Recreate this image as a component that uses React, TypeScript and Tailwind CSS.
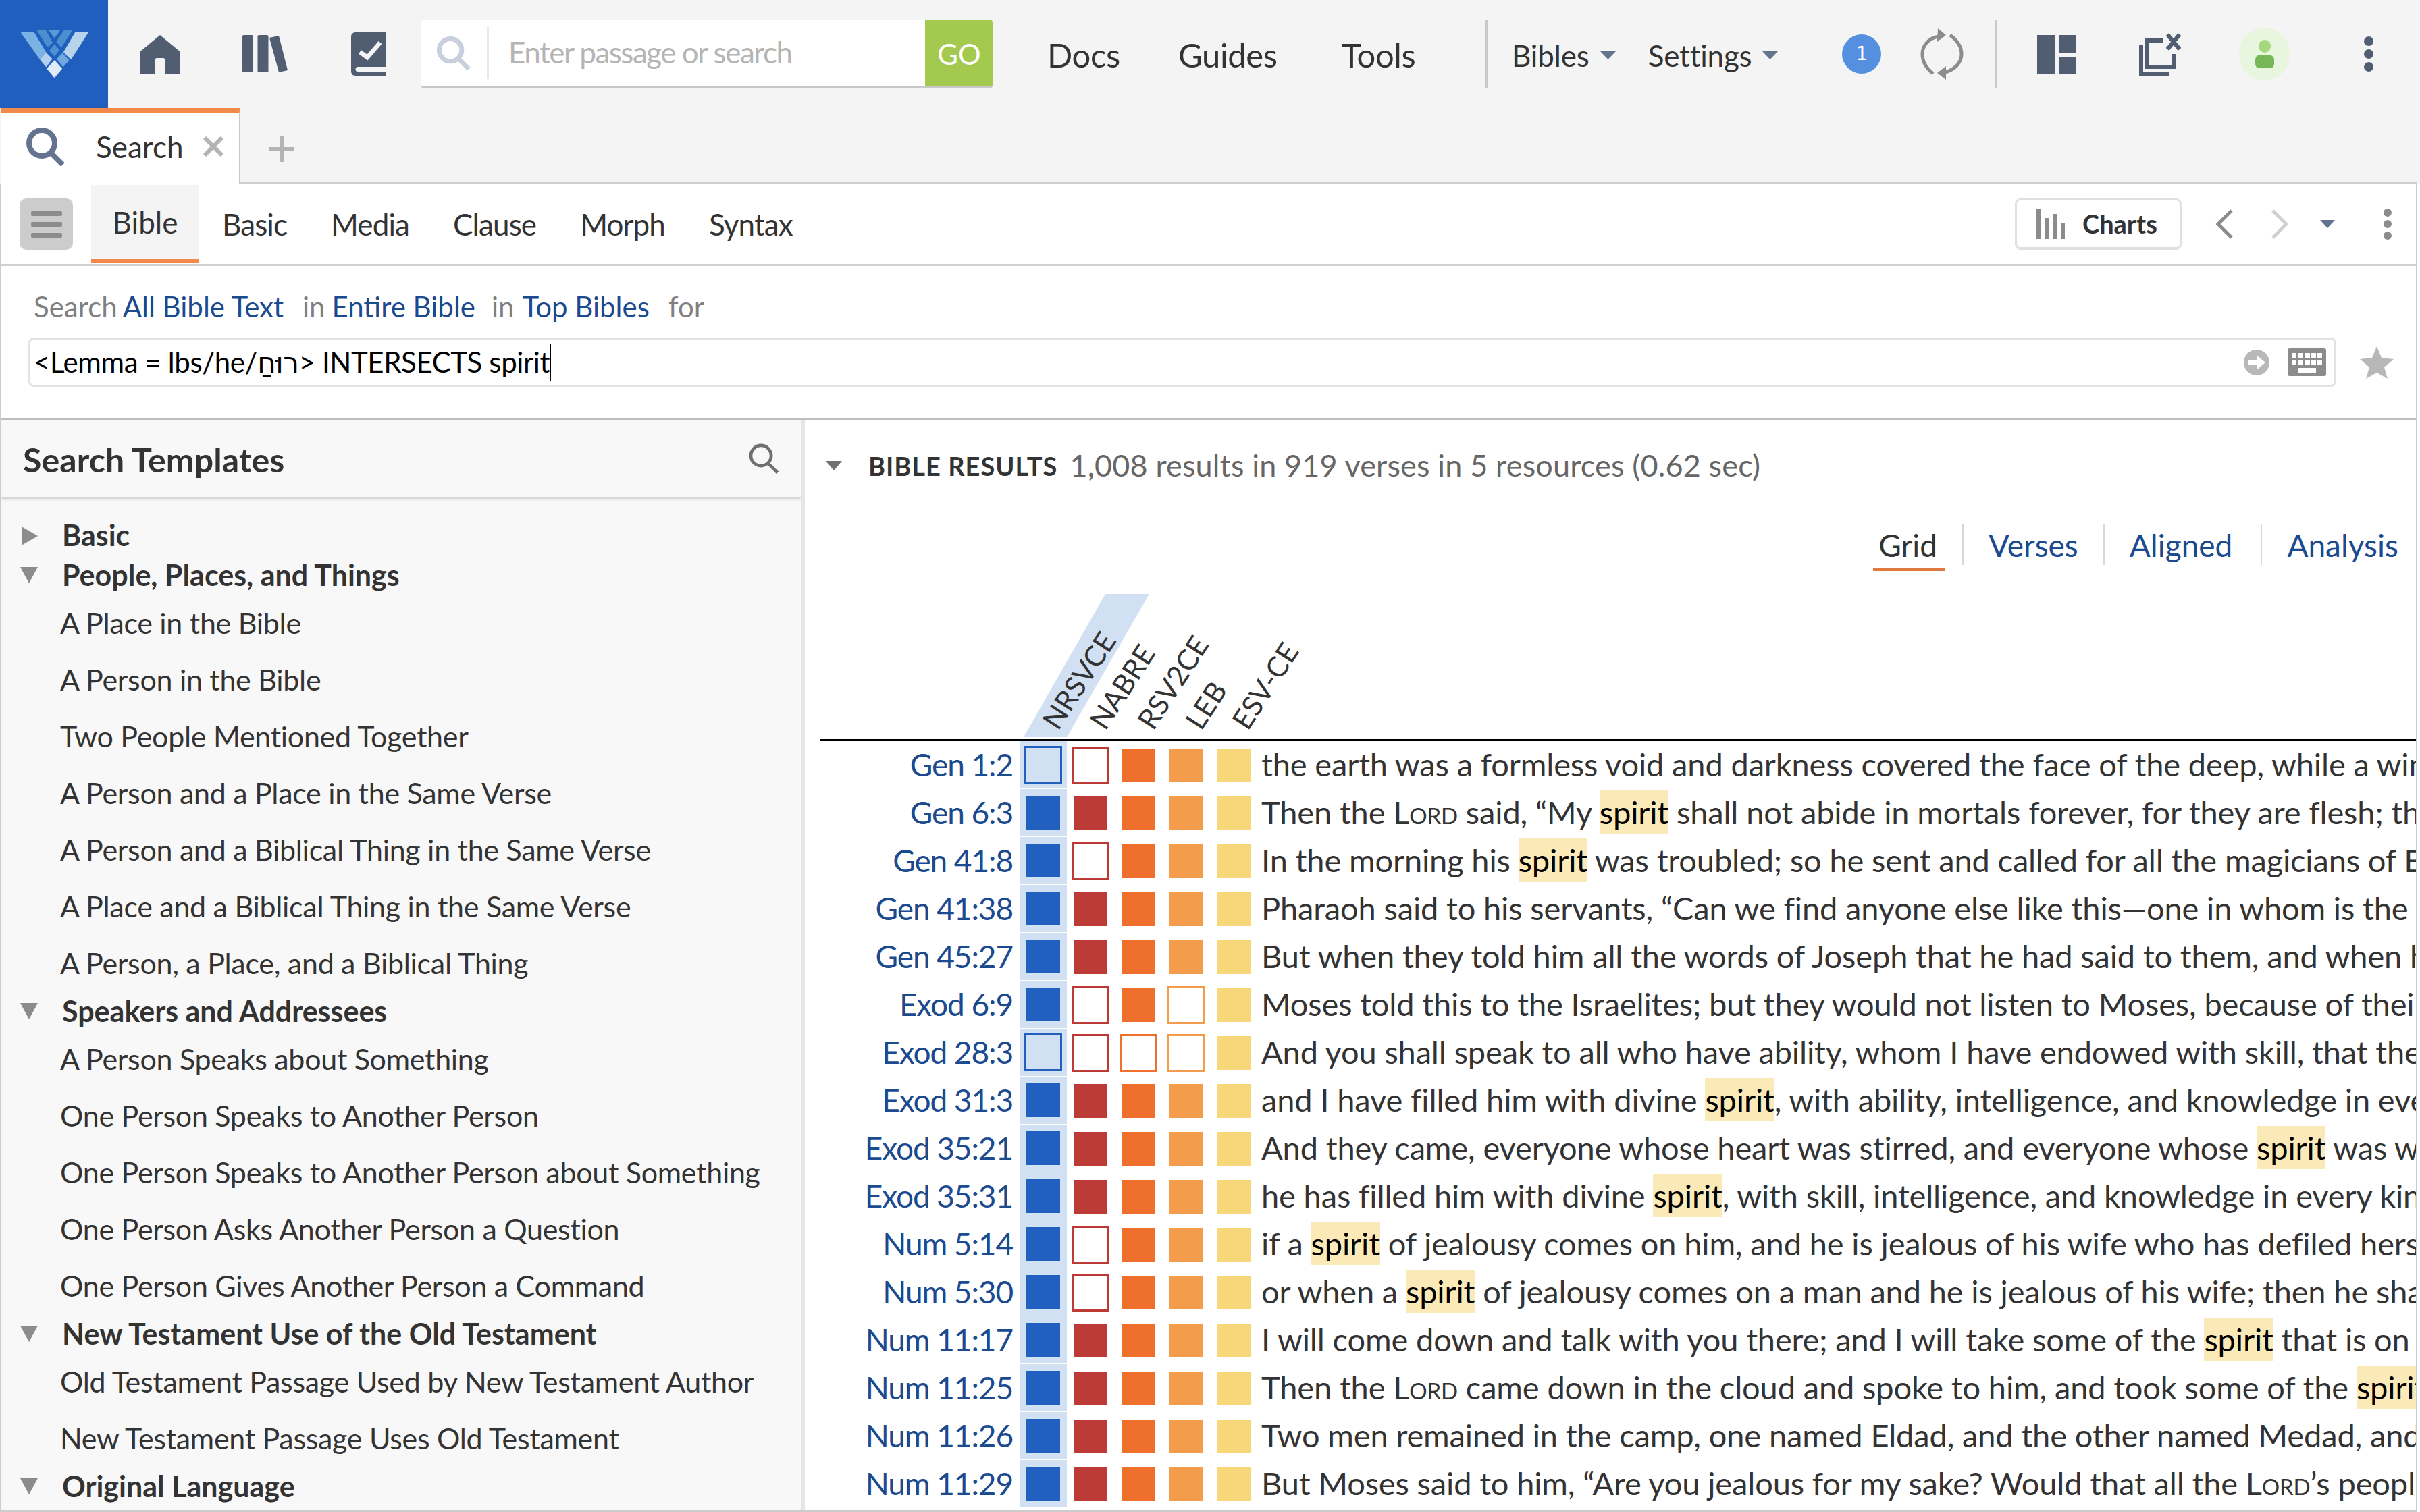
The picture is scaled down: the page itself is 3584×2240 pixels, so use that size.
import React from 'react';

const Tri = ({ dir = 'down', className = '' }: { dir?: 'down' | 'right'; className?: string }) => (
  <svg viewBox="0 0 24 24" className={className} preserveAspectRatio="none">
    <polygon points={dir === 'down' ? '0,0 24,0 12,24' : '0,0 24,12 0,24'} fill="currentColor" />
  </svg>
);

const Glass = ({ className = '', stroke = 8 }: { className?: string; stroke?: number }) => (
  <svg viewBox="0 0 58 58" className={className}>
    <circle cx="24" cy="24" r="19" fill="none" stroke="currentColor" strokeWidth={stroke} />
    <line x1="37" y1="38" x2="55" y2="56" stroke="currentColor" strokeWidth={stroke} />
  </svg>
);

const Logo = () => (
  <svg viewBox="0 0 480 480" className="w-[160px] h-[160px] shrink-0 bg-[#205fbe]">
    <g strokeLinejoin="round" strokeWidth="4">
      <polygon points="95,145 150,145 205,236 178,262" fill="#7ab3e3" stroke="#7ab3e3" />
      <polygon points="335,145 390,145 315,262 284,232" fill="#b7d4ec" stroke="#b7d4ec" />
      <polygon points="167,137 203,137 232,190 212,208" fill="#4c8fcf" stroke="#4c8fcf" />
      <polygon points="285,137 318,137 272,208 252,185" fill="#4c8fcf" stroke="#4c8fcf" />
      <polygon points="220,137 264,137 242,166" fill="#5a9bd6" stroke="#5a9bd6" />
      <polygon points="242,199 262,222 242,248 222,225" fill="#4e93d0" stroke="#4e93d0" />
      <polygon points="206,238 230,262 205,295 180,265" fill="#b3d1ec" stroke="#b3d1ec" />
      <polygon points="278,238 305,268 280,295 254,262" fill="#6fa9dd" stroke="#6fa9dd" />
      <polygon points="242,270 274,305 242,343 210,305" fill="#dfebf7" stroke="#dfebf7" />
    </g>
  </svg>
);

const HomeIcon = () => (
  <svg viewBox="0 0 58 57" className="w-[58px] h-[57px] shrink-0 ml-[48px] text-[#515e72]">
    <path d="M29 0 L58 24 V57 H37 V38 a4 4 0 0 0 -4 -4 H25 a4 4 0 0 0 -4 4 V57 H0 V24 Z" fill="currentColor" />
  </svg>
);

const LibraryIcon = () => (
  <svg viewBox="0 0 68 56" className="w-[68px] h-[56px] shrink-0 ml-[93px] text-[#515e72]">
    <rect x="0" y="0" width="16" height="55" rx="2" fill="currentColor" />
    <rect x="22.5" y="0" width="16" height="55" rx="2" fill="currentColor" />
    <polygon points="40,4 54,1 67,52 54,55" fill="currentColor" />
  </svg>
);

const BookIcon = () => (
  <svg viewBox="0 0 52 64" className="w-[52px] h-[64px] shrink-0 ml-[93px]">
    <path d="M6 0H52V64H6a6 6 0 0 1-6-6V6a6 6 0 0 1 6-6Z" fill="#515e72" />
    <path d="M10 51H52V58H10a3.5 3.5 0 0 1 0-7Z" fill="#f4f4f4" />
    <path d="M13 29 L24 37 L43 15" fill="none" stroke="#f4f4f4" strokeWidth="6.5" />
  </svg>
);

const SyncIcon = () => (
  <svg viewBox="0 0 64 76" className="w-[64px] h-[76px] shrink-0 text-[#8c8c8c]">
    <path d="M28 12 C 10 14, 3 28, 3 38 C 3 50, 10 60, 19 67" fill="none" stroke="currentColor" strokeWidth="5" />
    <path d="M44 10 C 55 18, 61 28, 61 38 C 61 50, 52 62, 33 66" fill="none" stroke="currentColor" strokeWidth="5" />
    <polygon points="26,0 38,10 25,20" fill="currentColor" />
    <polygon points="38,56 25,66 38,76" fill="currentColor" />
  </svg>
);

const LayoutIcon = () => (
  <svg viewBox="0 0 58 57" className="w-[58px] h-[57px] shrink-0 text-[#515e72]">
    <rect x="0" y="0" width="26" height="57" fill="currentColor" />
    <rect x="32" y="0" width="26" height="26" fill="currentColor" />
    <rect x="32" y="32" width="26" height="25" fill="currentColor" />
  </svg>
);

const CloseAllIcon = () => (
  <svg viewBox="0 0 65 64" className="w-[65px] h-[64px] shrink-0 text-[#515e72]">
    <path d="M3 19 V61 H45" fill="none" stroke="currentColor" strokeWidth="6" />
    <path d="M36 12 H12 V51 H51 V32" fill="none" stroke="currentColor" strokeWidth="6" />
    <path d="M42 3 L60 25 M60 3 L42 25" fill="none" stroke="currentColor" strokeWidth="6" />
  </svg>
);

const Avatar = () => (
  <div className="w-[75px] h-[78px] shrink-0 rounded-full bg-[#e9f6df] flex flex-col items-center justify-center gap-[3px]">
    <div className="w-[18px] h-[19px] rounded-full bg-[#a7d87f]" />
    <div className="w-[28px] h-[20px] rounded-t-[8px] rounded-b-[6px] bg-[#77b755]" />
  </div>
);

const Dots = ({ color, size }: { color: string; size: string }) => (
  <div className="flex flex-col items-center gap-[5px]">
    <div className={`${size} ${color} rounded-full`} />
    <div className={`${size} ${color} rounded-full`} />
    <div className={`${size} ${color} rounded-full`} />
  </div>
);

const TopBar = () => (
  <div className="h-[160px] flex items-center bg-[#f4f4f4] shrink-0">
    <Logo />
    <HomeIcon />
    <LibraryIcon />
    <BookIcon />
    <div className="ml-[51px] w-[848px] h-[102px] flex rounded-[6px] overflow-hidden bg-white border-b-[3px] border-[#c8c8c8] shrink-0">
      <div className="w-[98px] flex items-center pl-[23px] shrink-0">
        <Glass className="w-[51px] h-[51px] text-[#c9d0dd]" stroke={8} />
      </div>
      <div className="w-[3px] my-[11px] bg-[#e8e8e8] shrink-0" />
      <div className="flex-1 flex items-center pl-[29px] text-[44px] text-[#b5b5b5] tracking-[-1.5px] pb-[4px]">Enter passage or search</div>
      <div className="w-[101px] -mb-[3px] bg-[#a4c94f] text-white text-[42px] flex items-center justify-center">GO</div>
    </div>
    <div className="ml-[80px] pt-[3px] flex items-center text-[49px] tracking-[-0.4px] text-[#333333]">
      <span className="w-[194px]">Docs</span>
      <span className="w-[242px]">Guides</span>
      <span className="w-[213px]">Tools</span>
    </div>
    <div className="w-[3px] h-[102px] bg-[#c8c8c8] shrink-0" />
    <div className="ml-[36px] pt-[3px] flex items-center text-[44px] tracking-[-0.2px] text-[#333333]">
      <span>Bibles</span>
      <Tri className="ml-[16px] w-[23px] h-[12px] text-[#64748f]" />
      <span className="ml-[48px]">Settings</span>
      <Tri className="ml-[16px] w-[23px] h-[12px] text-[#64748f]" />
    </div>
    <div className="ml-[95px] w-[58px] h-[58px] rounded-full bg-[#5590e0] text-white text-[28px] font-['DejaVu_Sans',sans-serif] flex items-center justify-center shrink-0">1</div>
    <div className="ml-[58px]"><SyncIcon /></div>
    <div className="ml-[47px] w-[3px] h-[102px] bg-[#c8c8c8] shrink-0" />
    <div className="ml-[59px]"><LayoutIcon /></div>
    <div className="ml-[93px]"><CloseAllIcon /></div>
    <div className="ml-[83px]"><Avatar /></div>
    <div className="ml-[110px]"><Dots color="bg-[#515e72]" size="w-[14px] h-[14px]" /></div>
  </div>
);

const TabBar = () => (
  <div className="h-[113px] flex bg-[#f4f4f4] shrink-0">
    <div className="ml-[2px] w-[354px] bg-white border-t-[7px] border-[#f0894a] border-r-[2px] border-r-[#c8c8c8] flex items-center pb-[6px] shrink-0">
      <Glass className="ml-[36px] w-[58px] h-[58px] text-[#64748f]" stroke={8} />
      <span className="ml-[46px] text-[44px] text-[#333333]">Search</span>
      <svg viewBox="0 0 30 30" className="ml-[29px] w-[30px] h-[30px] text-[#b3b3b3]">
        <path d="M2 2 L28 28 M28 2 L2 28" stroke="currentColor" strokeWidth="6" />
      </svg>
    </div>
    <div className="flex-1 flex flex-col">
      <div className="flex-1 flex items-center pl-[42px] pt-[12px]">
        <svg viewBox="0 0 38 38" className="w-[38px] h-[38px] text-[#b3b3b3]">
          <path d="M19 0 V38 M0 19 H38" stroke="currentColor" strokeWidth="6" />
        </svg>
      </div>
      <div className="h-[3px] w-[3224px] bg-[#cfcfcf]" />
    </div>
  </div>
);

const toolTabs = ['Basic', 'Media', 'Clause', 'Morph', 'Syntax'];

const Toolbar = () => (
  <div className="h-[121px] flex items-center border-b-[3px] border-[#d0d0d0] shrink-0">
    <div className="ml-[27px] w-[79px] h-[76px] rounded-[10px] bg-[#cccccc] flex flex-col items-center justify-center gap-[9px] shrink-0">
      <div className="w-[46px] h-[7px] rounded-[2px] bg-[#8c8c8c]" />
      <div className="w-[46px] h-[7px] rounded-[2px] bg-[#8c8c8c]" />
      <div className="w-[46px] h-[7px] rounded-[2px] bg-[#8c8c8c]" />
    </div>
    <div className="ml-[27px] w-[160px] h-[116px] bg-[#f4f4f4] border-b-[7px] border-[#f0894a] flex items-center justify-center text-[44px] text-[#333333] shrink-0">Bible</div>
    <div className="flex text-[44px] text-[#333333] tracking-[-0.9px]">
      {toolTabs.map((t, i) => (
        <span key={t} className={i === 0 ? 'ml-[34px]' : 'ml-[65px]'}>{t}</span>
      ))}
    </div>
    <div className="ml-auto flex items-center">
      <div className="w-[247px] h-[76px] rounded-[8px] border-[3px] border-b-[4px] border-[#e0e0e0] flex items-center shrink-0">
        <svg viewBox="0 0 44 44" className="ml-[29px] w-[44px] h-[44px] text-[#8c8c8c]">
          <rect x="0" y="0" width="6" height="44" fill="currentColor" />
          <rect x="12" y="13" width="6" height="31" fill="currentColor" />
          <rect x="24" y="7" width="6" height="37" fill="currentColor" />
          <rect x="36" y="20" width="6" height="24" fill="currentColor" />
        </svg>
        <span className="ml-[24px] text-[38px] font-bold text-[#333333]">Charts</span>
      </div>
      <svg viewBox="0 0 26 44" className="ml-[50px] w-[26px] h-[44px] text-[#8c8c8c]">
        <path d="M24 2 L4 22 L24 42" fill="none" stroke="currentColor" strokeWidth="5" />
      </svg>
      <svg viewBox="0 0 26 44" className="ml-[57px] w-[26px] h-[44px] text-[#d0d0d0]">
        <path d="M2 2 L22 22 L2 42" fill="none" stroke="currentColor" strokeWidth="5" />
      </svg>
      <Tri className="ml-[46px] w-[22px] h-[12px] text-[#64748f]" />
      <div className="ml-[72px] mr-[36px]"><Dots color="bg-[#8c8c8c]" size="w-[12px] h-[12px]" /></div>
    </div>
  </div>
);

const Link = ({ children, className = '' }: { children: React.ReactNode; className?: string }) => (
  <span className={`text-[#1b4a8f] ${className}`}>{children}</span>
);

const QueryBar = () => (
  <div className="h-[228px] px-[40px] flex flex-col border-b-[3px] border-[#bdbdbd] shrink-0">
    <div className="h-[106px] pt-[15px] pl-[8px] flex items-center text-[42px] text-[#808080] whitespace-nowrap">
      <span>Search</span>
      <Link className="ml-[8px]">All Bible Text</Link>
      <span className="ml-[28px]">in</span>
      <Link className="ml-[10px]">Entire Bible</Link>
      <span className="ml-[24px]">in</span>
      <Link className="ml-[12px]">Top Bibles</Link>
      <span className="ml-[28px]">for</span>
    </div>
    <div className="flex items-center">
      <div className="w-[3418px] h-[73px] rounded-[8px] border-[3px] border-[#e2e2e2] flex items-center pl-[5px] shrink-0">
        <span className="text-[42px] text-black whitespace-nowrap tracking-[-0.4px]">{'<Lemma = lbs/he/רוּחַ> INTERSECTS spirit'}</span>
        <span className="w-[2px] h-[56px] bg-black shrink-0" />
        <div className="ml-auto flex items-center gap-[27px] mr-[12px]">
          <div className="w-[38px] h-[38px] rounded-full bg-[#b8b8b8] flex items-center justify-center">
            <svg viewBox="0 0 26 22" className="w-[26px] h-[22px]">
              <path d="M0 7 H13 V0 L26 11 L13 22 V15 H0 Z" fill="#ffffff" />
            </svg>
          </div>
          <svg viewBox="0 0 57 41" className="w-[57px] h-[41px]">
            <rect width="57" height="41" rx="3" fill="#8c8c8c" />
            <g fill="#ffffff">
              <rect x="6" y="7" width="7" height="7" />
              <rect x="16" y="7" width="7" height="7" />
              <rect x="26" y="7" width="7" height="7" />
              <rect x="35" y="7" width="7" height="7" />
              <rect x="44" y="7" width="7" height="7" />
              <rect x="6" y="17" width="7" height="7" />
              <rect x="16" y="17" width="7" height="7" />
              <rect x="26" y="17" width="7" height="7" />
              <rect x="35" y="17" width="7" height="7" />
              <rect x="44" y="17" width="7" height="7" />
              <rect x="16" y="29" width="26" height="7" />
            </g>
          </svg>
        </div>
      </div>
      <svg viewBox="0 0 50 48" className="ml-[35px] w-[50px] h-[48px] text-[#b8b8b8] shrink-0">
        <polygon points="25,0 32,17 50,19 36,31 41,48 25,39 9,48 14,31 0,19 18,17" fill="currentColor" />
      </svg>
    </div>
  </div>
);

const Heading = ({ label, open = true, tall = false }: { label: string; open?: boolean; tall?: boolean }) => (
  <div className={`${tall ? 'h-[59px]' : 'h-[58px]'} flex items-center`}>
    {open ? <Tri className="ml-[28px] w-[26px] h-[24px] text-[#8c8c8c]" /> : <Tri dir="right" className="ml-[30px] w-[24px] h-[28px] text-[#8c8c8c]" />}
    <span className="ml-[36px] font-bold text-[#333333]">{label}</span>
  </div>
);

const Item = ({ label }: { label: string }) => (
  <div className="h-[84px] flex items-center pl-[87px] text-[#333333] tracking-[-0.3px]">{label}</div>
);

const Sidebar = () => (
  <div className="w-[1184px] bg-[#f8f8f8] flex flex-col shrink-0 overflow-hidden">
    <div className="h-[115px] flex items-center px-[32px] shadow-[0_3px_3px_rgba(0,0,0,0.15)] shrink-0">
      <span className="text-[50px] font-bold text-[#333333] tracking-[0.1px] pt-[4px]">Search Templates</span>
      <Glass className="ml-auto w-[46px] h-[46px] text-[#707070] mb-[2px]" stroke={6} />
    </div>
    <div className="pt-[27px] text-[43px] whitespace-nowrap">
      <Heading label="Basic" open={false} tall />
      <Heading label="People, Places, and Things" />
      <Item label="A Place in the Bible" />
      <Item label="A Person in the Bible" />
      <Item label="Two People Mentioned Together" />
      <Item label="A Person and a Place in the Same Verse" />
      <Item label="A Person and a Biblical Thing in the Same Verse" />
      <Item label="A Place and a Biblical Thing in the Same Verse" />
      <Item label="A Person, a Place, and a Biblical Thing" />
      <Heading label="Speakers and Addressees" />
      <Item label="A Person Speaks about Something" />
      <Item label="One Person Speaks to Another Person" />
      <Item label="One Person Speaks to Another Person about Something" />
      <Item label="One Person Asks Another Person a Question" />
      <Item label="One Person Gives Another Person a Command" />
      <Heading label="New Testament Use of the Old Testament" />
      <Item label="Old Testament Passage Used by New Testament Author" />
      <Item label="New Testament Passage Uses Old Testament" />
      <Heading label="Original Language" />
    </div>
  </div>
);

// 1 = has the term (filled square), 0 = only an outline
const rows: { ref: string; cells: number[]; text: React.ReactNode }[] = [
  { ref: 'Gen 1:2', cells: [0, 0, 1, 1, 1], text: <>the earth was a formless void and darkness covered the face of the deep, while a wind from God swept</> },
  { ref: 'Gen 6:3', cells: [1, 1, 1, 1, 1], text: <>Then the <Lord /> said, “My <Hit /> shall not abide in mortals forever, for they are flesh; their days</> },
  { ref: 'Gen 41:8', cells: [1, 0, 1, 1, 1], text: <>In the morning his <Hit /> was troubled; so he sent and called for all the magicians of Egypt and all</> },
  { ref: 'Gen 41:38', cells: [1, 1, 1, 1, 1], text: <>Pharaoh said to his servants, “Can we find anyone else like this—one in whom is the spirit of God?”</> },
  { ref: 'Gen 45:27', cells: [1, 1, 1, 1, 1], text: <>But when they told him all the words of Joseph that he had said to them, and when he saw the wagons</> },
  { ref: 'Exod 6:9', cells: [1, 0, 1, 0, 1], text: <>Moses told this to the Israelites; but they would not listen to Moses, because of their broken spirit</> },
  { ref: 'Exod 28:3', cells: [0, 0, 0, 0, 1], text: <>And you shall speak to all who have ability, whom I have endowed with skill, that they make Aaron’s</> },
  { ref: 'Exod 31:3', cells: [1, 1, 1, 1, 1], text: <>and I have filled him with divine <Hit />, with ability, intelligence, and knowledge in every kind of craft</> },
  { ref: 'Exod 35:21', cells: [1, 1, 1, 1, 1], text: <>And they came, everyone whose heart was stirred, and everyone whose <Hit /> was willing, and brought</> },
  { ref: 'Exod 35:31', cells: [1, 1, 1, 1, 1], text: <>he has filled him with divine <Hit />, with skill, intelligence, and knowledge in every kind of craft</> },
  { ref: 'Num 5:14', cells: [1, 0, 1, 1, 1], text: <>if a <Hit /> of jealousy comes on him, and he is jealous of his wife who has defiled herself; or if</> },
  { ref: 'Num 5:30', cells: [1, 0, 1, 1, 1], text: <>or when a <Hit /> of jealousy comes on a man and he is jealous of his wife; then he shall set the woman</> },
  { ref: 'Num 11:17', cells: [1, 1, 1, 1, 1], text: <>I will come down and talk with you there; and I will take some of the <Hit /> that is on you and put it</> },
  { ref: 'Num 11:25', cells: [1, 1, 1, 1, 1], text: <>Then the <Lord /> came down in the cloud and spoke to him, and took some of the <Hit /> that was on him</> },
  { ref: 'Num 11:26', cells: [1, 1, 1, 1, 1], text: <>Two men remained in the camp, one named Eldad, and the other named Medad, and the spirit rested</> },
  { ref: 'Num 11:29', cells: [1, 1, 1, 1, 1], text: <>But Moses said to him, “Are you jealous for my sake? Would that all the <Lord />’s people were prophets</> },
];

function Hit() {
  return <span className="bg-[#fbe9b7] text-black py-[4px]">spirit</span>;
}

function Lord() {
  return <span className="[font-variant-caps:small-caps]">Lord</span>;
}

const solid = ['bg-[#2260bf]', 'bg-[#bc3b37]', 'bg-[#ef702d]', 'bg-[#f39c4b]', 'bg-[#f8d77a]'];
const outline = ['border-[#2260bf]', 'border-[#bc3b37]', 'border-[#ef702d]', 'border-[#f39c4b]', 'border-[#f8d77a]'];

const Row = ({ row }: { row: (typeof rows)[number] }) => (
  <div className="h-[71px] flex items-center">
    <Link className="w-[308px] text-right shrink-0 text-[46px] tracking-[-1.1px] pb-[3px]">{row.ref}</Link>
    <div className="ml-[10px] h-full grid grid-cols-[70px_70px_71px_71px_70px] shrink-0">
      {row.cells.map((c, i) => (
        <div key={i} className={`flex items-center justify-center ${i === 0 ? 'bg-[#d2e0f3] border-b border-white' : ''}`}>
          {c ? <div className={`w-[50px] h-[50px] ${solid[i]}`} /> : <div className={`w-[56px] h-[56px] border-[3px] ${outline[i]}`} />}
        </div>
      ))}
    </div>
    <div className="ml-[6px] pb-[3px] text-[47px] tracking-[-0.15px] text-[#333333] whitespace-nowrap">{row.text}</div>
  </div>
);

const labels = [
  { name: 'NRSVCE', left: 'left-[380px]' },
  { name: 'NABRE', left: 'left-[450px]' },
  { name: 'RSV2CE', left: 'left-[521px]' },
  { name: 'LEB', left: 'left-[592px]' },
  { name: 'ESV-CE', left: 'left-[661px]' },
];

const views = ['Verses', 'Aligned', 'Analysis'];

const Results = () => (
  <div className="flex-1 min-w-0 bg-white overflow-hidden flex flex-col">
    <div className="h-[138px] flex items-center pl-[31px] pb-[2px] whitespace-nowrap shrink-0">
      <Tri className="w-[24px] h-[14px] text-[#707070]" />
      <span className="ml-[39px] text-[38px] font-bold text-[#333333] tracking-[1px]">BIBLE RESULTS</span>
      <span className="ml-[18px] text-[45px] tracking-[0.15px] text-[#666666]">1,008 results in 919 verses in 5 resources (0.62 sec)</span>
    </div>
    <div className="h-[94px] flex justify-end items-center pr-[26px] text-[46px] shrink-0">
      <span className="relative text-[#333333]">
        Grid
        <span className="absolute -left-[8px] -right-[11px] -bottom-[4px] h-[4px] bg-[#e07a3c]" />
      </span>
      {views.map((v, i) => (
        <React.Fragment key={v}>
          <span className={`${i === 2 ? 'ml-[42px]' : 'ml-[37px]'} mr-[37px] w-[2px] h-[60px] bg-[#d8d8d4]`} />
          <Link>{v}</Link>
        </React.Fragment>
      ))}
    </div>
    <div className="h-[241px] relative shrink-0">
      <svg viewBox="0 0 190 212" className="absolute left-[324px] top-[26px] w-[190px] h-[212px]">
        <polygon points="121,0 186,0 64,212 0,212" fill="#d2e0f3" />
      </svg>
      {labels.map((l) => (
        <span key={l.name} className={`absolute bottom-[8px] ${l.left} origin-bottom-left -rotate-[57deg] text-[42px] leading-[44px] text-[#333333] whitespace-nowrap`}>{l.name}</span>
      ))}
    </div>
    <div className="ml-[22px] h-[3px] bg-black shrink-0" />
    <div>
      {rows.map((r) => <Row key={r.ref} row={r} />)}
    </div>
  </div>
);

export default function App() {
  return (
    <div className="w-[3584px] h-[2240px] overflow-hidden flex flex-col bg-white font-['Lato','Noto_Sans','DejaVu_Sans',sans-serif]">
      <TopBar />
      <TabBar />
      <div className="flex-1 min-h-0 w-[3580px] border-x-2 border-[#cccccc] flex flex-col bg-white">
        <Toolbar />
        <QueryBar />
        <div className="flex-1 min-h-0 flex">
          <Sidebar />
          <div className="w-[6px] bg-[#e6e6e6] shrink-0" />
          <Results />
        </div>
        <div className="h-[3px] bg-[#cccccc] shrink-0" />
      </div>
    </div>
  );
}
